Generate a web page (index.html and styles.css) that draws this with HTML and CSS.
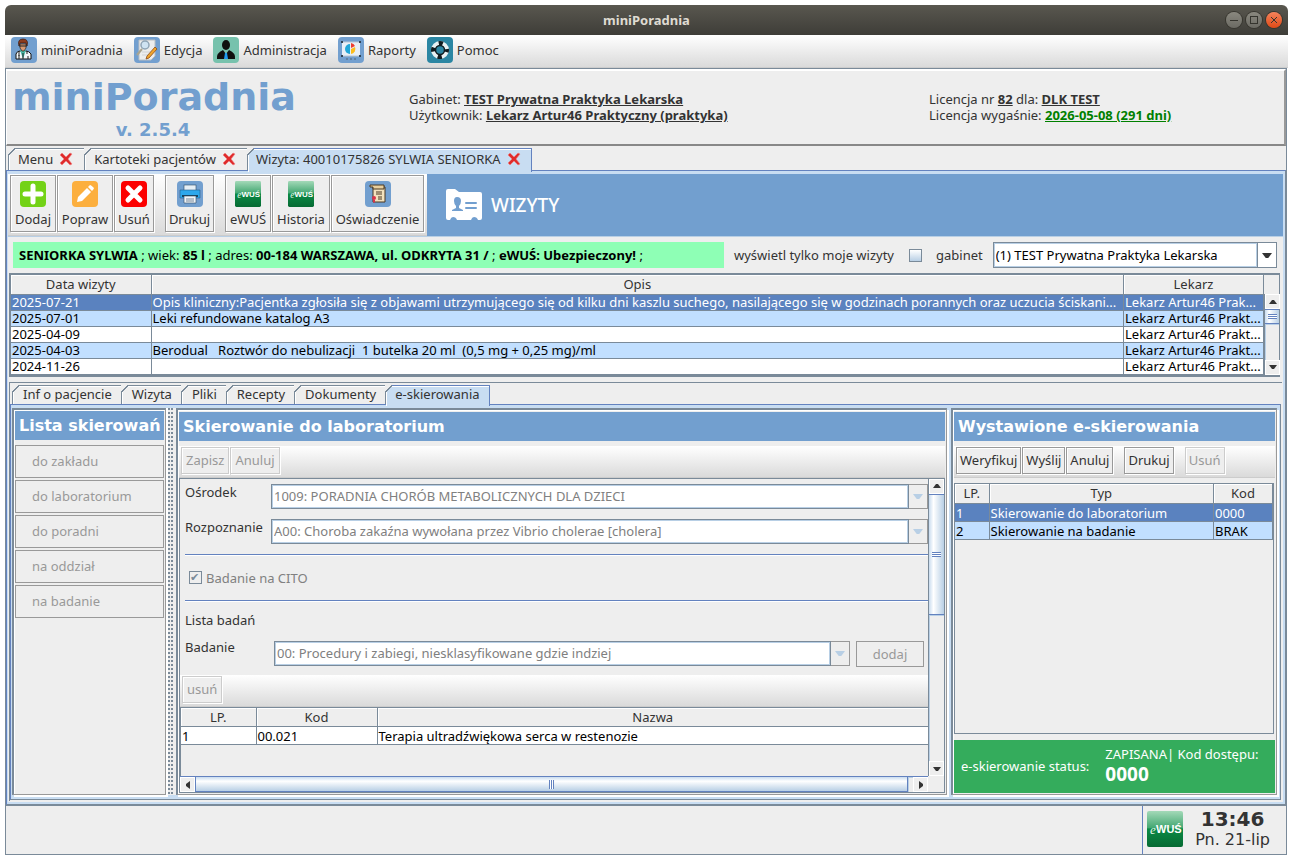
FILE: index.html
```html
<!DOCTYPE html>
<html lang="pl">
<head>
<meta charset="UTF-8">
<title>miniPoradnia</title>
<link rel="stylesheet" href="styles.css">
</head>
<body>

<svg class="defs" aria-hidden="true">
  <defs>
    <linearGradient id="ewusBg" x1="0" y1="0" x2="0" y2="1">
      <stop offset="0" stop-color="#a3d9b8"/>
      <stop offset="0.46" stop-color="#45a873"/>
      <stop offset="0.5" stop-color="#0b8a45"/>
      <stop offset="1" stop-color="#066a33"/>
    </linearGradient>
    <symbol id="ewus" viewBox="0 0 36 36">
      <rect width="36" height="36" rx="2" fill="url(#ewusBg)"/>
      <text x="3" y="23" font-family="Liberation Serif, serif" font-style="italic" font-size="13" fill="#e4f5ea">e</text>
      <text x="9" y="22" font-family="Liberation Sans, sans-serif" font-weight="bold" font-size="11" fill="#fff">WUŚ</text>
    </symbol>
    <symbol id="cross" viewBox="0 0 14 14">
      <path d="M1 3L3 1L7 5L11 1L13 2L9 7L13 12L11 13L7 9L3 13L1 11L5 7Z" fill="#df2b2b" stroke="#f08080" stroke-width="0.6"/>
    </symbol>
    <symbol id="up" viewBox="0 0 8 4"><path d="M0 4L3 0H5L8 4Z"/></symbol>
    <symbol id="down" viewBox="0 0 8 4"><path d="M0 0H8L5 4H3Z"/></symbol>
  </defs>
</svg>

<div class="window">
  <header class="titlebar">
    <span class="title">miniPoradnia</span>
    <div class="winbtns">
      <button aria-label="Minimalizuj"><svg viewBox="0 0 16 16"><path d="M4 8.500H12"/></svg></button>
      <button aria-label="Maksymalizuj"><svg viewBox="0 0 16 16"><rect x="4.500" y="4.500" width="7" height="7"/></svg></button>
      <button class="close" aria-label="Zamknij"><svg viewBox="0 0 16 16"><path d="M5 5L11 11M11 5L5 11"/></svg></button>
    </div>
  </header>

  <nav class="menubar">
    <button>
      <svg viewBox="0 0 26 26"><rect width="26" height="26" rx="4" fill="#729fcf"/><path d="M5 22V17Q6 14 9 14H15Q18 14 20 17V22Z" fill="#f4f8fa" stroke="#111"/><path d="M9 13L12 22L15 13Z" fill="#49b9a5"/><path d="M8 14V19M16 14V17M12 16V22M8 18V22M17 19V22" stroke="#222"/><path d="M9 7H15V11L13 14H11L9 11Z" fill="#d99a72" stroke="#222" stroke-width="0.7"/><path d="M8 9Q6 2 12 2Q18 2 16 9L15 6H9Z" fill="#8c3b1e" stroke="#3b1508" stroke-width="0.7"/><path d="M8 9H16" stroke="#222"/></svg>
      miniPoradnia
    </button>
    <button>
      <svg viewBox="0 0 26 26"><rect width="26" height="26" rx="4" fill="#729fcf"/><path d="M5 3H21V19L17 23H5Z" fill="#eceded" stroke="#b9bec2"/><path d="M8 15H17M8 18H14" stroke="#cfd2d5"/><path d="M8 12L3 18" stroke="#a9a48f" stroke-width="2"/><circle cx="11" cy="8" r="4" fill="#cfe3f2" stroke="#8fa4b5" stroke-width="1.500"/><path d="M21 10L23 12L15 21L12 22L13 19Z" fill="#f0a52c" stroke="#8a4a18" stroke-width="0.8"/></svg>
      Edycja
    </button>
    <button>
      <svg viewBox="0 0 26 26"><rect width="26" height="26" rx="4" fill="#77c2ad"/><ellipse cx="13" cy="8" rx="4" ry="5" fill="#10100f"/><path d="M4 22Q3 16 10 13L13 17L16 13Q23 16 22 22Z" fill="#10100f"/><path d="M12 16H14L15 22H11Z" fill="#1e9bf0"/></svg>
      Administracja
    </button>
    <button>
      <svg viewBox="0 0 26 26"><rect width="26" height="26" rx="4" fill="#729fcf"/><rect x="4" y="5" width="18" height="14" fill="#e8eff7"/><path d="M4 5H22M4 19H22" stroke="#b9c6d4"/><path d="M3 5H5M21 5H23M3 19H5M21 19H23" stroke="#345" stroke-width="2"/><path d="M12 7A5 5 0 0 0 12 17Z" fill="#22a7d8"/><path d="M13 11V6A5 5 0 0 1 17 9Z" fill="#ee3d2f"/><path d="M13 12L17 10A5 5 0 0 1 13 17Z" fill="#fdbd1c"/><path d="M8 22H10M12 22H14M16 22H18" stroke="#567"/></svg>
      Raporty
    </button>
    <button>
      <svg viewBox="0 0 26 26"><rect width="26" height="26" rx="4" fill="#2b86a3"/><circle cx="13" cy="13" r="6.500" fill="none" stroke="#e8f1f3" stroke-width="5"/><circle cx="13" cy="13" r="6.500" fill="none" stroke="#101c20" stroke-width="5" stroke-dasharray="4 6.200" stroke-dashoffset="2"/><circle cx="13" cy="13" r="4.500" fill="#2b86a3" stroke="#101c20" stroke-width="1.500"/></svg>
      Pomoc
    </button>
  </nav>

  <div class="frame">
    <section class="info">
      <div class="brand">
        <h1>miniPoradnia</h1>
        <div class="version">v. 2.5.4</div>
      </div>
      <div class="office">
        Gabinet: <b>TEST Prywatna Praktyka Lekarska</b><br>
        Użytkownik: <b>Lekarz Artur46 Praktyczny (praktyka)</b>
      </div>
      <div class="license">
        Licencja nr <b>82</b> dla: <b>DLK TEST</b><br>
        Licencja wygaśnie: <b class="valid">2026-05-08 (291 dni)</b>
      </div>
    </section>

    <div class="tabs main-tabs" role="tablist">
      <button class="tab" role="tab">Menu <svg class="x"><use href="#cross"/></svg></button>
      <button class="tab" role="tab">Kartoteki pacjentów <svg class="x"><use href="#cross"/></svg></button>
      <button class="tab active" role="tab" aria-selected="true">Wizyta: 40010175826 SYLWIA SENIORKA <svg class="x"><use href="#cross"/></svg></button>
    </div>

    <main class="page">
      <div class="page-inner">
        <div class="top">
          <div class="toolbar big">
            <button class="w1"><svg viewBox="0 0 26 26"><rect width="26" height="26" rx="4" fill="#73d216"/><path d="M13 5V21M5 13H21" stroke="#fff" stroke-width="5" stroke-linecap="round"/></svg>Dodaj</button>
            <button class="w2"><svg viewBox="0 0 26 26"><rect width="26" height="26" rx="4" fill="#fcaf3e"/><path d="M5 21L6 16L15 7L19 11L10 20ZM16 6L18 4Q19 4 22 7Q22 8 20 10Z" fill="#fff"/></svg>Popraw</button>
            <button class="w3"><svg viewBox="0 0 26 26"><rect width="26" height="26" rx="4" fill="#fc0000"/><path d="M7 7L19 19M19 7L7 19" stroke="#fff" stroke-width="5" stroke-linecap="round"/></svg>Usuń</button>
            <span class="gap"></span>
            <button class="w4"><svg viewBox="0 0 26 26"><rect width="26" height="26" rx="4" fill="#729fcf"/><rect x="7" y="4" width="12" height="7" fill="#e6eef5" stroke="#2c4a66" stroke-width="0.6"/><path d="M3 9H23V17H3Z" fill="#2ea8ec" stroke="#27608d" stroke-width="0.6"/><path d="M5 15H21" stroke="#123" stroke-width="1.500"/><path d="M7 15H19V22H7Z" fill="#f0f4f7" stroke="#2c4a66" stroke-width="0.6"/><path d="M9 18H17M9 20H17" stroke="#789"/></svg>Drukuj</button>
            <span class="gap"></span>
            <button class="w1"><svg><use href="#ewus"/></svg>eWUŚ</button>
            <button class="w5"><svg><use href="#ewus"/></svg>Historia</button>
            <button class="w6"><svg viewBox="0 0 26 26"><rect width="26" height="26" rx="4" fill="#729fcf"/><path d="M8 6H20V21H8Z" fill="#f3e2bd" stroke="#4a3922"/><path d="M5 4H19V8H8V6H5Z" fill="#e8cf9e" stroke="#4a3922"/><path d="M11 11H17M11 13H17M13 16H17M13 18H17" stroke="#4a3922"/><circle cx="9" cy="17" r="2" fill="#d8344a"/><path d="M8 19V22L9 21L10 22V19" fill="#d8344a"/></svg>Oświadczenie</button>
          </div>
          <div class="heading">
            <svg viewBox="0 0 38 34"><path d="M3 1H10L14 4H35Q37 4 37 6V30Q37 32 35 32H33Q32 29 29 29Q27 29 26 32H12Q11 29 8 29Q6 29 5 32H3Q1 32 1 30V3Q1 1 3 1Z" fill="#fff"/><path d="M12 9Q16 9 16 13Q16 16 14 18V20L18 22V23H7V22L11 20V18Q9 16 9 13Q9 9 12 9Z" fill="#729fcf"/><path d="M21 15H31M21 20H31" stroke="#729fcf" stroke-width="2" stroke-linecap="round"/></svg>
            <h2>WIZYTY</h2>
          </div>
        </div>

        <div class="patient">
          <div class="patient-data"><b>SENIORKA SYLWIA</b> ; wiek: <b>85 l</b> ; adres: <b>00-184 WARSZAWA, ul. ODKRYTA 31 /</b> ; <b>eWUŚ: Ubezpieczony!</b> ;</div>
          <label for="mine">wyświetl tylko moje wizyty</label>
          <input type="checkbox" class="check" id="mine">
          <label for="office" class="office-label">gabinet</label>
          <span class="combo office-combo">
            <select id="office"><option>(1) TEST Prywatna Praktyka Lekarska</option></select>
            <span class="arrow"><svg><use href="#down"/></svg></span>
          </span>
        </div>

        <div class="grid visits">
          <table>
            <colgroup><col class="c-date"><col><col class="c-doc"></colgroup>
            <thead><tr><th>Data wizyty</th><th>Opis</th><th>Lekarz</th></tr></thead>
            <tbody>
              <tr class="sel"><td>2025-07-21</td><td>Opis kliniczny:Pacjentka zgłosiła się z objawami utrzymującego się od kilku dni kaszlu suchego, nasilającego się w godzinach porannych oraz uczucia ściskani...</td><td>Lekarz Artur46 Prak...</td></tr>
              <tr class="alt"><td>2025-07-01</td><td>Leki refundowane katalog A3</td><td>Lekarz Artur46 Prakt...</td></tr>
              <tr><td>2025-04-09</td><td></td><td>Lekarz Artur46 Prakt...</td></tr>
              <tr class="alt"><td>2025-04-03</td><td>Berodual &nbsp; Roztwór do nebulizacji &nbsp;1 butelka 20 ml &nbsp;(0,5 mg + 0,25 mg)/ml</td><td>Lekarz Artur46 Prakt...</td></tr>
              <tr><td>2024-11-26</td><td></td><td>Lekarz Artur46 Prakt...</td></tr>
            </tbody>
          </table>
          <div class="side">
            <div class="corner"></div>
            <div class="vscroll">
              <button aria-label="W górę"><svg><use href="#up"/></svg></button>
              <div class="thumb small"><i></i></div>
              <div class="track"></div>
              <button aria-label="W dół"><svg><use href="#down"/></svg></button>
            </div>
          </div>
        </div>

        <div class="subbox">
          <div class="tabs sub-tabs" role="tablist">
            <button class="tab" role="tab">Inf o pacjencie</button>
            <button class="tab" role="tab">Wizyta</button>
            <button class="tab" role="tab">Pliki</button>
            <button class="tab" role="tab">Recepty</button>
            <button class="tab" role="tab">Dokumenty</button>
            <button class="tab active" role="tab" aria-selected="true">e-skierowania</button>
          </div>

          <div class="columns">
            <section class="panel list">
              <h3>Lista skierowań</h3>
              <button disabled>do zakładu</button>
              <button disabled>do laboratorium</button>
              <button disabled>do poradni</button>
              <button disabled>na oddział</button>
              <button disabled>na badanie</button>
            </section>

            <div class="divider"></div>

            <section class="panel referral">
              <h3>Skierowanie do laboratorium</h3>
              <div class="toolbar">
                <button disabled>Zapisz</button>
                <button disabled>Anuluj</button>
              </div>
              <div class="scrollpane">
                <form class="form">
                  <div class="row">
                    <label for="osrodek">Ośrodek</label>
                    <span class="combo off">
                      <select id="osrodek" disabled><option>1009: PORADNIA CHORÓB METABOLICZNYCH DLA DZIECI</option></select>
                      <span class="arrow"><svg><use href="#down"/></svg></span>
                    </span>
                  </div>
                  <div class="row">
                    <label for="rozpoznanie">Rozpoznanie</label>
                    <span class="combo off">
                      <select id="rozpoznanie" disabled><option>A00: Choroba zakaźna wywołana przez Vibrio cholerae [cholera]</option></select>
                      <span class="arrow"><svg><use href="#down"/></svg></span>
                    </span>
                  </div>
                  <div class="cito">
                    <input type="checkbox" class="check" id="cito" checked disabled>
                    <label for="cito">Badanie na CITO</label>
                  </div>
                  <div class="tests">Lista badań</div>
                  <div class="row exam">
                    <label for="badanie">Badanie</label>
                    <span class="combo off">
                      <select id="badanie" disabled><option>00: Procedury i zabiegi, niesklasyfikowane gdzie indziej</option></select>
                      <span class="arrow"><svg><use href="#down"/></svg></span>
                    </span>
                    <button class="add" type="button" disabled>dodaj</button>
                  </div>
                  <div class="toolbar"><button type="button" disabled>usuń</button></div>
                  <div class="grid tests-grid">
                    <table>
                      <colgroup><col class="c-lp"><col class="c-code"><col></colgroup>
                      <thead><tr><th>LP.</th><th>Kod</th><th>Nazwa</th></tr></thead>
                      <tbody><tr><td>1</td><td>00.021</td><td>Terapia ultradźwiękowa serca w restenozie</td></tr></tbody>
                    </table>
                  </div>
                </form>
                <div class="vscroll">
                  <button aria-label="W górę"><svg><use href="#up"/></svg></button>
                  <div class="thumb"><i></i></div>
                  <div class="track"></div>
                  <button aria-label="W dół"><svg><use href="#down"/></svg></button>
                </div>
                <div class="hscroll">
                  <button aria-label="W lewo"><svg viewBox="0 0 4 8"><path d="M4 0V8L0 5V3Z"/></svg></button>
                  <div class="thumb"><i></i></div>
                  <div class="track"></div>
                  <button aria-label="W prawo"><svg viewBox="0 0 4 8"><path d="M0 0V8L4 5V3Z"/></svg></button>
                </div>
              </div>
            </section>

            <section class="panel issued">
              <h3>Wystawione e-skierowania</h3>
              <div class="toolbar">
                <button>Weryfikuj</button>
                <button>Wyślij</button>
                <button>Anuluj</button>
                <span class="gap"></span>
                <button>Drukuj</button>
                <span class="gap"></span>
                <button disabled>Usuń</button>
              </div>
              <div class="grid issued-grid">
                <table>
                  <colgroup><col class="c-no"><col><col class="c-kod"></colgroup>
                  <thead><tr><th>LP.</th><th>Typ</th><th>Kod</th></tr></thead>
                  <tbody>
                    <tr class="sel"><td>1</td><td>Skierowanie do laboratorium</td><td>0000</td></tr>
                    <tr class="alt"><td>2</td><td>Skierowanie na badanie</td><td>BRAK</td></tr>
                  </tbody>
                </table>
              </div>
              <div class="status">
                <span>e-skierowanie status:</span>
                <div>ZAPISANA| Kod dostępu:<strong>0000</strong></div>
              </div>
            </section>
          </div>
        </div>
      </div>
    </main>
  </div>

  <footer class="statusbar">
    <div class="clock">
      <svg><use href="#ewus"/></svg>
      <div><strong>13:46</strong>Pn. 21-lip</div>
    </div>
  </footer>
</div>

</body>
</html>
```
FILE: styles.css
```css
* {
  box-sizing: border-box;
}

body {
  margin: 0;
  padding: 5px 9px 10px 5px;
  min-height: 100vh;
  display: flex;
  background: #fff;
  color: #333;
  font: 13px/16px "Noto Sans", sans-serif;
}

button, select, input {
  font: inherit;
  color: inherit;
  margin: 0;
}

button {
  padding: 0;
  border: 0;
  background: none;
  white-space: nowrap;
}

h1, h2, h3 {
  margin: 0;
}

svg {
  display: block;
  flex: none;
}

.defs {
  position: absolute;
  width: 0;
  height: 0;
}

.window {
  flex: 1;
  min-width: 0;
  display: flex;
  flex-direction: column;
}

/* title bar */
.titlebar {
  display: grid;
  grid-template-columns: 1fr auto 1fr;
  align-items: center;
  height: 30px;
  padding: 0 6px;
  border-radius: 6px 6px 0 0;
  background: linear-gradient(#59574f, #3e3d38);
}

.title {
  grid-column: 2;
  color: #dfdbd2;
  font-weight: bold;
}

.winbtns {
  display: flex;
  justify-content: flex-end;
  gap: 4px;
}

.winbtns button {
  width: 16px;
  height: 16px;
  border-radius: 8px;
  background: linear-gradient(#8a887f, #6b6a63);
  box-shadow: 0 0 0 1px #37362f;
}

.winbtns .close {
  background: linear-gradient(#f5835c, #df4a16);
}

.winbtns path, .winbtns rect {
  fill: none;
  stroke: #35342e;
}

/* menu */
.menubar {
  display: flex;
  gap: 11px;
  height: 33px;
  padding: 2px 6px 5px;
  background: linear-gradient(#fff, #dadada);
  border-bottom: 1px solid #ccc;
}

.menubar button {
  display: flex;
  align-items: center;
  gap: 4px;
}

.menubar svg, .big svg {
  width: 26px;
  height: 26px;
}

.frame {
  flex: 1;
  display: flex;
  flex-direction: column;
  margin-right: 1px;
  border: 1px solid #7a8a99;
  border-bottom: 0;
  background: #eee;
}

.info {
  display: flex;
  height: 77px;
  border-top: 2px solid #fff;
  border-left: 1px solid #fff;
  border-right: 2px solid #999;
  border-bottom: 2px solid #888;
}

.brand {
  width: 402px;
  padding-left: 5px;
  color: #729fcf;
  font-family: "DejaVu Sans", sans-serif;
  font-weight: bold;
}

.brand h1 {
  font-size: 38px;
  line-height: 52px;
}

.version {
  width: 282px;
  font-size: 18px;
  line-height: 14px;
  text-align: center;
}

.office {
  width: 520px;
  padding-top: 20px;
}

.license {
  padding-top: 20px;
}

.info b {
  text-decoration: underline;
}

.info .valid {
  color: #008000;
}

/* tabs */
.tabs {
  display: flex;
}

.tab {
  position: relative;
  display: flex;
  align-items: center;
  justify-content: center;
  gap: 6px;
  border: 1px solid #7a8a99;
  border-bottom: 0;
  border-left-width: 0;
  box-shadow: inset 1px 1px #fff;
}

.tab:first-child {
  border-left-width: 1px;
}

.tab::before {
  content: "";
  position: absolute;
  left: -1px;
  top: -1px;
  width: 7px;
  height: 7px;
  background: linear-gradient(135deg, #eee 45%, #7a8a99 45% 58%, transparent 58%);
}

.tab.active {
  background: #c8ddf2;
  border-color: #6382bf;
  margin-bottom: -2px;
}

.x {
  width: 14px;
  height: 14px;
}

.main-tabs {
  padding: 2px 2px 0;
}

.main-tabs .tab {
  height: 22px;
  padding: 0 11px 1px 9px;
}

.main-tabs .active {
  height: 24px;
  padding: 0 10px 3px 8px;
}

.page {
  flex: 1;
  display: flex;
  flex-direction: column;
  padding: 3px 2px 2px 1px;
  background: #c8ddf2;
  border: 1px solid #7a8a99;
  border-top-color: #6382bf;
  border-left-color: #6382bf;
}

.page-inner {
  flex: 1;
  display: flex;
  flex-direction: column;
  background: #eee;
}

.top {
  display: flex;
  height: 62px;
}

.toolbar {
  display: flex;
  align-items: flex-start;
  gap: 1px;
  height: 32px;
  padding: 1px 2px;
  background: linear-gradient(#fff, #dadada);
  border-bottom: 1px solid #ccc;
}

.toolbar button {
  height: 27px;
  padding: 0 4px;
  background: #eee;
  border: 1px solid #999;
  box-shadow: inset 1px 1px #fff, 1px 1px #fff;
}

.toolbar button:disabled {
  color: #999;
  border-color: #ccc;
}

.toolbar .gap {
  width: 9px;
}

.big {
  width: 419px;
  height: 62px;
}

.big button {
  display: flex;
  flex-direction: column;
  align-items: center;
  gap: 4px;
  height: 57px;
  padding: 5px 0 0;
}

.w1 { width: 46px; }
.w2 { width: 56px; }
.w3 { width: 40px; }
.w4 { width: 49px; }
.w5 { width: 58px; }
.w6 { width: 93px; }

.heading {
  flex: 1;
  display: flex;
  align-items: center;
  gap: 8px;
  padding-left: 18px;
  background: #729fcf;
  color: #fff;
}

.heading svg {
  width: 38px;
  height: 34px;
}

.heading h2 {
  font: 500 19px/24px "Noto Sans", sans-serif;
}

/* patient bar */
.patient {
  display: flex;
  align-items: center;
  height: 37px;
  padding: 0 6px 0 5px;
  border-top: 1px solid #b8cfe5;
}

.patient-data {
  width: 711px;
  margin-right: 10px;
  padding: 5px 6px;
  background: #8effb5;
  color: #000;
  white-space: nowrap;
  overflow: hidden;
}

.check {
  appearance: none;
  width: 13px;
  height: 13px;
  border: 1px solid #7a8a99;
  background: linear-gradient(#fff, #b8cfe5);
}

.patient .check {
  margin-left: 15px;
}

.office-label {
  margin: 0 10px 0 14px;
}

.combo {
  display: flex;
  flex: 1;
  min-width: 0;
  height: 26px;
}

.combo select {
  flex: 1;
  min-width: 0;
  appearance: none;
  padding: 0 2px;
  border: 1px solid #7a8a99;
  border-radius: 0;
  background: #fff;
  box-shadow: inset 0 0 0 1px #b8cfe5;
  color: #000;
  opacity: 1;
}

.arrow {
  display: flex;
  align-items: center;
  justify-content: center;
  width: 19px;
  border: 1px solid #7a8a99;
  border-left: 0;
  background: #fff;
}

.arrow svg {
  width: 10px;
  height: 5px;
  fill: #333;
}

.combo.off {
  height: 25px;
}

.combo.off select {
  color: #808080;
}

.combo.off .arrow {
  background: #eee;
  border-color: #999;
}

.combo.off svg {
  fill: #b8cfe5;
}

/* tables */
.grid {
  display: flex;
  border: 1px solid #7a8a99;
}

.grid table {
  flex: 1;
  width: 100%;
  table-layout: fixed;
  border-collapse: collapse;
  color: #000;
}

.grid th, .grid td {
  padding: 0 1px;
  border-right: 1px solid #7a8a99;
  border-bottom: 1px solid #7a8a99;
  font-weight: normal;
  white-space: nowrap;
  overflow: hidden;
}

.grid th {
  height: 20px;
  background: #eee;
  color: #333;
  box-shadow: inset 1px 1px #fff;
}

.grid td {
  height: 18px;
  background: #fff;
  text-align: left;
}

.grid .alt td {
  background: #c1dfff;
}

.grid .sel td {
  background: #5a82bf;
  color: #fff;
}

.visits {
  margin: 0 3px 0 1px;
  border-top-width: 2px;
  border-left-width: 2px;
  border-bottom: 2px double #7a8a99;
}

.visits th {
  height: 19px;
}

.visits td {
  height: 16px;
  line-height: 15px;
}

.c-date { width: 140px; }
.c-doc { width: 140px; }
.c-lp { width: 75px; }
.c-code { width: 121px; }
.c-no { width: 34px; }
.c-kod { width: 59px; }

.side {
  width: 15px;
  display: flex;
  flex-direction: column;
}

.corner {
  height: 19px;
}

.vscroll, .hscroll {
  display: flex;
}

.vscroll {
  flex: 1;
  flex-direction: column;
  border-left: 1px solid #7a8a99;
}

.vscroll button, .hscroll button {
  display: flex;
  align-items: center;
  justify-content: center;
  flex: none;
  width: 15px;
  height: 15px;
  border: 1px solid #fff;
}

.vscroll svg {
  width: 8px;
  height: 4px;
  fill: #333;
}

.hscroll svg {
  width: 4px;
  height: 8px;
  fill: #333;
}

.track {
  flex: 1;
  box-shadow: inset 1px 1px #b8cfe5, 0 1px #7a8a99;
}

.thumb {
  display: flex;
  align-items: center;
  justify-content: center;
  height: 121px;
  border: 1px solid #6382bf;
  border-right: 0;
  border-left: 0;
  background: linear-gradient(90deg, #c9dcef, #fff 30%, #b8cfe5);
}

.thumb.small {
  height: 15px;
}

.thumb i {
  width: 9px;
  height: 5px;
  background: repeating-linear-gradient(#6382bf 0 1px, #fff 1px 2px);
}

/* lower tabs */
.subbox {
  flex: 1;
  display: flex;
  flex-direction: column;
  margin: 5px 1px 1px;
  padding: 2px 1px 1px 0;
  border-top: 1px solid #7a8a99;
  border-left: 1px solid #7a8a99;
}

.sub-tabs {
  padding-left: 2px;
}

.sub-tabs .tab {
  height: 19px;
  padding: 0 9px 1px 10px;
}

.sub-tabs .active {
  height: 21px;
  padding: 0 9px 3px;
}

.columns {
  flex: 1;
  display: flex;
  padding: 3px 3px 4px 1px;
  border: 1px solid #7a8a99;
  border-top-color: #6382bf;
  border-left-color: #6382bf;
  background: #c8ddf2;
}

.panel {
  display: flex;
  flex-direction: column;
  padding: 1px;
  background: #eee;
  border: 2px solid #7a8a99;
  border-right: 1px solid #999;
  border-bottom: 1px solid #999;
  box-shadow: inset 1px 1px #fff, 2px 2px #fff;
}

.panel h3 {
  padding: 0 4px;
  margin-bottom: 5px;
  background: #729fcf;
  color: #fff;
  font: bold 16px/29px "DejaVu Sans", sans-serif;
  white-space: nowrap;
}

.list {
  width: 154px;
}

.list button {
  height: 33px;
  margin-bottom: 2px;
  padding-left: 16px;
  border: 1px solid #999;
  color: #999;
  text-align: left;
}

.divider {
  width: 10px;
  background: radial-gradient(circle at 1px 1px, #7a8a99 1px, #eee 1px) 0 0 / 3px 4px;
  border-left: 2px solid #fff;
  border-right: 2px solid #eee;
}

.referral, .issued {
  padding-top: 2px;
}

.referral {
  flex: 1;
  min-width: 0;
}

.issued {
  width: 326px;
  margin-left: 4px;
}

.issued .toolbar button {
  padding: 0 3px;
}

.scrollpane {
  flex: 1;
  display: grid;
  grid-template-columns: minmax(0, 1fr) 16px;
  grid-template-rows: 1fr 16px;
  border: 1px solid #7a8a99;
}

.form {
  display: flex;
  flex-direction: column;
  padding-top: 5px;
}

.row {
  display: flex;
  margin-bottom: 10px;
  padding-left: 5px;
}

.row label {
  width: 86px;
}

.cito {
  display: flex;
  align-items: center;
  gap: 4px;
  height: 47px;
  margin-left: 5px;
  padding: 1px 0 0 4px;
  border-top: 1px solid #6382bf;
  border-bottom: 1px solid #6382bf;
  box-shadow: inset 0 1px #fff, 0 1px #fff;
  color: #808080;
}

.cito .check {
  background: #eee;
}

.cito .check::before {
  content: "✔";
  display: block;
  font: 11px/11px "DejaVu Sans", sans-serif;
  color: #7a8a99;
}

.tests {
  margin: 11px 5px 13px;
}

.exam {
  margin-bottom: 8px;
  padding-right: 4px;
}

.exam label {
  width: 89px;
  line-height: 12px;
}

.add {
  width: 68px;
  height: 26px;
  margin-left: 6px;
  border: 1px solid #999;
  color: #999;
}

.tests-grid {
  flex: 1;
  min-height: 68px;
  border-width: 1px 0 0 1px;
  align-items: flex-start;
}

.tests-grid th {
  height: 19px;
}

.tests-grid th:last-child, .tests-grid td:last-child {
  border-right: 0;
}

.scrollpane .vscroll {
  background: #eee;
}

.hscroll {
  border-top: 1px solid #6382bf;
}

.hscroll .thumb {
  flex: 1;
  height: 15px;
  border: 1px solid #6382bf;
  border-top: 0;
  background: linear-gradient(#c9dcef, #fff 30%, #b8cfe5);
}

.hscroll .thumb i {
  width: 5px;
  height: 9px;
  background: repeating-linear-gradient(90deg, #6382bf 0 1px, #fff 1px 2px);
}

.hscroll .track {
  flex: none;
  width: 5px;
}

.issued-grid {
  flex: 1;
  align-items: flex-start;
  margin: 5px 1px 6px 0;
}

.status {
  display: flex;
  align-items: center;
  gap: 16px;
  height: 53px;
  padding: 0 0 2px 7px;
  background: #34ac5c;
  color: #fff;
}

.status strong {
  display: block;
  font-size: 19px;
  line-height: 24px;
}

/* footer */
.statusbar {
  display: flex;
  justify-content: flex-end;
  height: 50px;
  margin-right: 1px;
  border: 1px solid #7a8a99;
  background: #eee;
}

.clock {
  display: flex;
  align-items: center;
  gap: 12px;
  padding: 0 16px 2px 4px;
  border-left: 1px solid #6382bf;
}

.clock svg {
  width: 36px;
  height: 36px;
}

.clock div {
  font: 16px/20px "DejaVu Sans", sans-serif;
  text-align: center;
}

.clock strong {
  display: block;
  font-size: 20px;
  line-height: 22px;
}
```
